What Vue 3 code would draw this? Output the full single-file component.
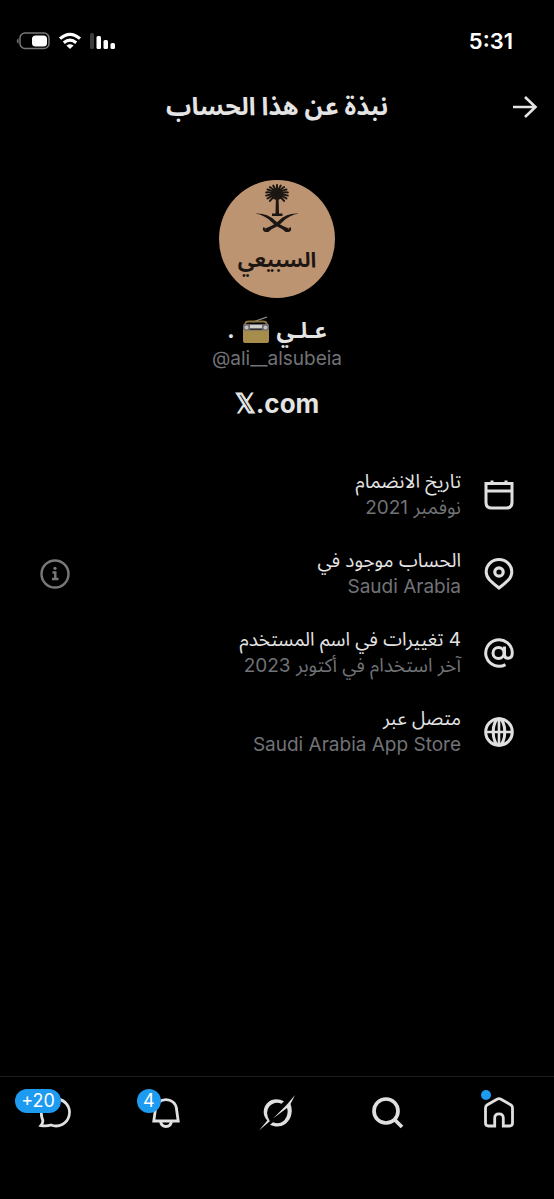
<template>
  <div class="screen" dir="rtl">
    <div class="status">
      <span class="time">5:31</span>
      <div class="status-icons" dir="ltr">
        <svg width="34" height="18" viewBox="0 0 34 18">
          <path d="M2.500 6Q-1 9 2.500 12z" fill="#77777a" />
          <rect x="4" y="1" width="29" height="15.500" rx="5" fill="none" stroke="#77777a" stroke-width="1.500" />
          <rect x="16" y="3.500" width="15" height="11" rx="3.500" fill="#fff" />
        </svg>
        <svg width="24" height="18" viewBox="0 0 24 18">
          <g fill="none" stroke="#fff" stroke-width="3.200">
            <path d="M2 6.600Q12 -2 22 6.600" />
            <path d="M5.800 10.800Q12 5.600 18.200 10.800" />
          </g>
          <path d="M8.400 13.600Q12 10.800 15.600 13.600L12 17z" fill="#fff" />
        </svg>
        <svg width="26" height="18" viewBox="0 0 26 18">
          <rect x="0" y="1" width="4" height="16" rx="1.500" fill="#3b3b3d" />
          <rect x="6.500" y="4" width="4.500" height="13" rx="1.500" fill="#fff" />
          <rect x="13.500" y="8" width="4.500" height="9" rx="1.500" fill="#fff" />
          <rect x="20.500" y="11" width="4.500" height="6" rx="1.500" fill="#fff" />
        </svg>
      </div>
    </div>

    <header class="header">
      <button class="back" aria-label="رجوع">
        <svg width="26" height="24" viewBox="0 0 26 24" fill="none" stroke="#e4e4e4" stroke-width="2.600">
          <path d="M1 12H23.500M13 2L23.500 12L13 22" />
        </svg>
      </button>
      <h1>نبذة عن هذا الحساب</h1>
    </header>

    <main class="content">
      <section class="profile">
        <div class="avatar">
          <svg class="emblem" width="46" height="50" viewBox="0 0 46 50">
            <path d="M22 10H24.500L25 29.500H28.500V32H18V29.500H21.500z" fill="#1d1713" />
            <circle cx="23" cy="10" r="6" fill="#1d1713" />
            <g stroke="#1d1713" stroke-width="2" fill="none" stroke-linecap="round">
              <path v-for="leaf in leaves" :key="leaf" :d="leaf" />
            </g>
            <g fill="#1d1713">
              <path d="M1 29.500Q13 28.500 21 36.500Q27 42 35 44.500L34 47Q23 44 17.500 38Q11 31 1 29.500z" />
              <path d="M45 29.500Q33 28.500 25 36.500Q19 42 11 44.500L12 47Q23 44 28.500 38Q35 31 45 29.500z" />
            </g>
            <path d="M10 43.500Q9 47.500 14 47L18.500 43M36 43.500Q37 47.500 32 47L27.500 43" fill="none" stroke="#1d1713" stroke-width="2" />
          </svg>
          <span class="avatar-name">السبيعي</span>
        </div>
        <h2 class="name">
          <span>عـلـي</span>
          <svg width="28" height="28" viewBox="0 0 28 28">
            <path d="M11 6L25 1" stroke="#9c9890" stroke-width="1.200" />
            <path d="M3 9Q3 5.500 7 5.500H21Q25 5.500 25 9" fill="none" stroke="#8a7540" stroke-width="1.800" />
            <rect x="1" y="8" width="26" height="19" rx="2" fill="#a68d4c" />
            <rect x="1" y="8" width="26" height="6.500" rx="2" fill="#6a6a70" />
            <rect x="8" y="9" width="12" height="3" fill="#d0d0cd" />
            <path d="M8 13.500H20" stroke="#333" />
            <circle cx="4.500" cy="11.500" r="2" fill="#c4c3c0" />
            <circle cx="23.500" cy="11.500" r="2" fill="#c4c3c0" />
          </svg>
          <span>.</span>
        </h2>
        <p class="handle" dir="ltr">@ali__alsubeia</p>
        <p class="brand" dir="ltr"><span class="brand-x">𝕏</span>.com</p>
      </section>

      <ul class="facts">
        <li v-for="fact in facts" :key="fact.title" class="fact">
          <svg class="fact-icon" width="32" height="32" viewBox="0 0 32 32" fill="none" stroke="#e0e0e0" stroke-width="3">
            <template v-if="fact.icon === 'calendar'">
              <path d="M3 4.500H29V23.500Q29 29 23.500 29H8.500Q3 29 3 23.500zM3 12H29M9 1.500V5M23 1.500V5" />
            </template>
            <template v-else-if="fact.icon === 'pin'">
              <path d="M16 30C9 24.500 3.200 20.500 3.200 14A12.800 12.500 0 0 1 28.800 14C28.800 20.500 23 24.500 16 30z" />
              <circle cx="16" cy="14" r="4.200" stroke-width="3.200" />
            </template>
            <template v-else-if="fact.icon === 'at'">
              <circle cx="15.500" cy="16" r="5.500" />
              <path d="M21.500 9.500V17.500Q21.500 21.300 25 21.300Q29.300 21.300 29.300 15.500A13.300 13.300 0 1 0 22.500 27.600" />
            </template>
            <template v-else>
              <circle cx="16" cy="16" r="13.300" />
              <ellipse cx="16" cy="16" rx="5.800" ry="13.300" />
              <path d="M16 2.500V29.500M2.500 16H29.500" stroke-width="2.600" />
            </template>
          </svg>
          <div class="fact-text">
            <div class="fact-title">{{ fact.title }}</div>
            <div class="fact-value">{{ fact.value }}</div>
          </div>
          <button v-if="fact.info" class="info" aria-label="معلومات">
            <svg width="32" height="32" viewBox="0 0 32 32" fill="none" stroke="#77787a" stroke-width="2.400">
              <circle cx="16" cy="16" r="13.500" />
              <path d="M13.500 14.500H16.300V21M13 21H19.500" />
              <circle cx="16" cy="10.300" r="1.600" fill="#77787a" stroke="none" />
            </svg>
          </button>
        </li>
      </ul>
    </main>

    <nav class="tabs">
      <a class="tab" href="#" aria-label="الرئيسية">
        <svg width="36" height="36" viewBox="0 0 36 36" fill="none" stroke="#e0e0e0" stroke-width="2.800">
          <path d="M4.500 13Q4.500 11 6 10L16 4.200Q18 3 20 4.200L30 10Q31.500 11 31.500 13V28Q31.500 31 28.500 31H22.300V23Q22.300 18.800 18 18.800Q13.700 18.800 13.700 23V31H7.500Q4.500 31 4.500 28z" />
        </svg>
        <span class="dot"></span>
      </a>
      <a class="tab" href="#" aria-label="بحث">
        <svg width="36" height="36" viewBox="0 0 36 36" fill="none" stroke="#e0e0e0" stroke-width="3.700">
          <circle cx="16" cy="16" r="12" />
          <path d="M24.500 24.500L32 32" />
        </svg>
      </a>
      <a class="tab" href="#" aria-label="Grok">
        <svg width="36" height="36" viewBox="0 0 36 36">
          <path d="M25 6.300C16 1 5.500 6 4.700 16Q4.400 21.500 8.300 25.500L0 35.500L10.800 26.300Q5.500 17 10.500 11.300Q15.500 6 22.500 8.700z" fill="#e0e0e0" />
          <path d="M36 0L31.500 9Q34 15.500 31.500 22.300C27.500 31.500 18.500 33.500 11 29.700L14 27.300Q23.500 30.500 27.500 21.800Q29.500 17 28 13L14 23.500L27.500 10z" fill="#e0e0e0" />
        </svg>
      </a>
      <a class="tab" href="#" aria-label="الإشعارات">
        <svg width="36" height="36" viewBox="0 0 36 36" fill="none" stroke="#e0e0e0" stroke-width="2.800">
          <path d="M5.800 26L7.500 14C8.500 1.500 27.500 1.500 28.500 14L30.200 26zM12.500 26Q13 31.500 18 31.500Q23 31.500 23.500 26" />
        </svg>
        <span class="badge single" dir="ltr">4</span>
      </a>
      <a class="tab" href="#" aria-label="الرسائل">
        <svg width="36" height="36" viewBox="0 0 36 36" fill="none" stroke="#e0e0e0" stroke-width="2.800">
          <path d="M20 4A13.500 13.500 0 1 1 14 30Q9.500 31.500 4 30.500Q7 27 5 23Q1 9 20 4z" />
        </svg>
        <span class="badge" dir="ltr">+20</span>
      </a>
    </nav>
  </div>
</template>

<script setup>
const facts = [
  { icon: 'calendar', title: 'تاريخ الانضمام', value: 'نوفمبر 2021' },
  { icon: 'pin', title: 'الحساب موجود في', value: 'Saudi Arabia', info: true },
  { icon: 'at', title: '4 تغييرات في اسم المستخدم', value: 'آخر استخدام في أكتوبر 2023' },
  { icon: 'globe', title: 'متصل عبر', value: 'Saudi Arabia App Store' }
]

// palm leaves fan out from the top of the trunk
const leaves = []
for (let a = -230; a <= 50; a += 20) {
  const r = (a * Math.PI) / 180
  const x = 23 + Math.cos(r) * 11
  const y = 10 + Math.sin(r) * 9
  leaves.push(`M23 10Q${23 + Math.cos(r) * 7} ${9 + Math.sin(r) * 6} ${x} ${y}`)
}
</script>

<style>
body {
  background: #000;
}
</style>

<style scoped>
.screen {
  min-height: 100vh;
  display: flex;
  flex-direction: column;
  background: #000;
  color: #e4e4e4;
  font-family: Inter, "Noto Sans Arabic", "DejaVu Sans", sans-serif;
}
h1, h2, p, ul {
  margin: 0;
  padding: 0;
}
button {
  display: flex;
  padding: 0;
  border: 0;
  background: none;
}
.status {
  display: flex;
  justify-content: space-between;
  align-items: center;
  height: 81px;
  padding: 0 41px 0 16px;
}
.time {
  color: #fff;
  font-size: 22px;
  font-weight: 600;
}
.status-icons {
  display: flex;
  gap: 8px;
}
.header {
  display: grid;
  grid-template-columns: 40px 1fr 40px;
  align-items: center;
  height: 50px;
  padding: 0 16px;
}
.header h1 {
  text-align: center;
  font-size: 25px;
  font-weight: 700;
}
.content {
  flex: 1;
}
.profile {
  display: flex;
  flex-direction: column;
  align-items: center;
  padding-top: 49px;
}
.avatar {
  display: flex;
  flex-direction: column;
  align-items: center;
  width: 116px;
  height: 118px;
  border-radius: 50%;
  background: #bd9472;
}
.emblem {
  margin-top: 4px;
}
.avatar-name {
  margin-top: 10px;
  color: #1d1713;
  font-size: 21px;
  font-weight: 700;
  line-height: 32px;
}
.name {
  display: flex;
  align-items: center;
  gap: 7px;
  margin-top: 18px;
  font-size: 22px;
  line-height: 28px;
}
.handle {
  margin-top: 2px;
  color: #717377;
  font-size: 19px;
  line-height: 26px;
}
.brand {
  margin-top: 16px;
  font-size: 26px;
  font-weight: 700;
  line-height: 32px;
}
.brand-x {
  font-family: "DejaVu Sans", sans-serif;
  font-weight: 400;
  -webkit-text-stroke: 1px #e4e4e4;
}
.facts {
  display: flex;
  flex-direction: column;
  gap: 27px;
  margin-top: 49px;
  padding: 0 39px;
  list-style: none;
}
.fact {
  display: flex;
  align-items: center;
  gap: 22px;
}
.fact-text {
  flex: 1;
  font-size: 19px;
  line-height: 26px;
}
.fact-value {
  color: #717377;
}
.tabs {
  display: grid;
  grid-template-columns: repeat(5, 1fr);
  height: 122px;
  border-top: 1px solid #1c1c1e;
}
.tab {
  position: relative;
  display: flex;
  justify-content: center;
  align-items: flex-start;
  padding-top: 18px;
  text-decoration: none;
}
.dot {
  position: absolute;
  top: 13px;
  left: 38px;
  width: 10px;
  height: 10px;
  border-radius: 50%;
  background: #1d9bf0;
}
.badge {
  position: absolute;
  top: 12px;
  left: 15px;
  width: 46px;
  border-radius: 12px;
  background: #1d9bf0;
  color: #fff;
  font-size: 18px;
  line-height: 24px;
  text-align: center;
}
.single {
  left: 26px;
  width: 24px;
}
</style>
